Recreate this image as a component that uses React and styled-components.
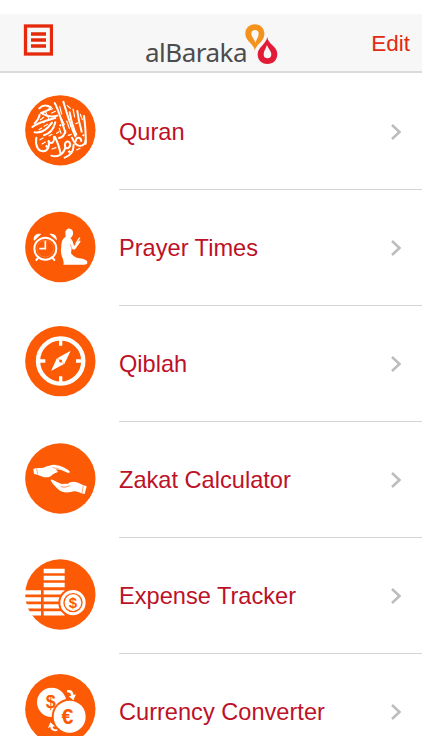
import styled, { createGlobalStyle } from 'styled-components';

const ORANGE = '#fd5a05';

const QuranIcon = () => (
  <g fill="none" stroke="#fff" strokeLinecap="round" strokeLinejoin="round">
    <g strokeWidth="6">
      <path d="M119 54 C128 68 139 104 151 143" />
      <path d="M145 50 C153 76 164 116 181 154" />
      <path d="M164 82 C168 104 174 128 184 149" />
      <path d="M187 78 C190 102 196 126 200 140" />
      <path d="M207 93 C211 122 213 150 212 176" />
      <path d="M73 70 C83 60 96 60 108 67 C101 78 89 80 78 84 C94 94 112 97 127 92" />
      <path d="M52 126 C70 112 96 106 121 99" />
      <path d="M59 142 C77 145 96 134 111 113" />
      <path d="M59 115 C66 109 72 99 74 89" />
      <path d="M87 151 C105 146 116 132 121 112" />
      <path d="M132 159 C143 157 149 149 151 138" />
      <path d="M64 158 C60 180 68 199 85 199 C99 198 104 184 101 168" />
      <path d="M101 169 C111 181 119 169 117 155" />
      <path d="M120 156 C128 173 134 190 136 204" />
      <path d="M109 212 C128 218 146 207 151 188" />
      <path d="M151 187 C146 173 157 164 164 173 C170 184 158 194 151 187 Z" />
      <path d="M149 218 C168 211 176 197 176 179" />
      <path d="M171 158 C179 177 187 187 202 181 C208 178 212 173 212 166" />
      <path d="M182 168 C184 155 197 155 199 168" />
    </g>
    <g strokeWidth="3.5">
      <path d="M92 82 L103 104 M101 76 L113 71 M110 84 L121 79" />
      <path d="M76 104 L86 97 M87 124 L98 118 M72 134 L80 129" />
      <path d="M134 64 L140 87 M157 62 L166 70 M174 72 L179 96" />
      <path d="M139 100 L148 119 M155 108 L163 130 M196 88 L202 104" />
      <path d="M75 164 L84 159 M81 177 L91 171 M102 153 L111 148" />
      <path d="M138 145 L133 130 M160 151 L169 148 M185 195 L195 190" />
      <path d="M111 192 L123 188 M125 145 L132 140 M182 116 L189 113" />
    </g>
    <g fill="#fff" stroke="none">
      <path d="M90 184l5 -5 5 5 -5 5zM158 200l5 -5 5 5 -5 5zM132 121l4 -4 4 4 -4 4zM83 111l4 -4 4 4 -4 4zM201 151l4 -4 4 4 -4 4z" />
    </g>
  </g>
);

const PrayerIcon = () => (
  <g>
    <g fill="none" stroke="#fff">
      <circle cx="91" cy="146" r="33" strokeWidth="6" />
      <path d="M91 122 V146 H73" strokeWidth="5" />
      <path d="M70 173 L64 180 M112 173 L118 180" strokeWidth="6" strokeLinecap="round" />
    </g>
    <path d="M56 119 C55 106 65 98 79 102 L58 122 Z M103 102 C116 98 127 107 125 121 Z" fill="#fff" />
    <circle cx="91" cy="146" r="25" fill="none" stroke="#fff" strokeWidth="1" opacity="0.55" />
    <path
      fill="#fff"
      d="M151 99 C151 90 157 85 164 86 C172 87 175 93 174 102 C173 109 169 112 166 115 C172 119 174 126 177 138 L190 124 C193 120 198 122 196 126 L181 147 C178 151 173 149 170 145 L168 160 C174 167 181 173 193 175 C207 177 217 180 217 187 C217 193 213 194 206 194 H145 C148 186 144 181 143 175 C137 162 137 150 139 138 C140 123 143 115 152 110 Z"
    />
    <path d="M182 132 L190 119 L195 113" fill="none" stroke="#fff" strokeWidth="4" />
    <path d="M170 146 L166 133" fill="none" stroke={ORANGE} strokeWidth="1.5" />
  </g>
);

const QiblahIcon = () => (
  <g>
    <circle cx="137" cy="135" r="68" fill="none" stroke="#fff" strokeWidth="13" />
    <path d="M137 72 V89 M137 181 V198 M74 135 H91 M183 135 H200" stroke="#fff" strokeWidth="10" />
    <path d="M167 104 L148 144 L128 126 Z M108 165 L126 126 L147 144 Z" fill="#fff" />
    <circle cx="137" cy="135" r="4.5" fill={ORANGE} />
  </g>
);

const ZakatIcon = () => (
  <g fill="#fff">
    <path d="M55 108 C65 103 75 106 85 104 C97 99 108 95 119 95 C134 98 149 101 163 114 C166 119 163 121 158 119 L137 110 C133 111 127 109 122 110 C128 113 130 116 127 118 C116 121 111 127 103 132 C90 135 78 130 68 125 L57 123 Z" />
    <path d="M108 144 C105 139 110 138 114 141 L134 151 C142 155 151 150 158 153 C166 145 178 145 189 149 C198 153 206 157 215 160 L209 183 C198 183 190 175 180 175 C166 177 154 181 142 176 C132 174 124 163 114 153 Z" />
    <path d="M112 103 C119 106 126 107 133 108" fill="none" stroke={ORANGE} strokeWidth="1.5" />
    <path d="M137 160 C146 165 155 162 164 158" fill="none" stroke={ORANGE} strokeWidth="2" />
    <path d="M65 107 L68 124 M205 157 L201 180" stroke={ORANGE} strokeWidth="1.5" />
  </g>
);

const ExpenseIcon = () => (
  <g>
    <path
      stroke="#fff"
      strokeWidth="13"
      d="M86 63 H149 M86 84 H149 M86 105 H149 M86 127 H149 M86 148 H149 M86 169 H149 M86 190 H149"
    />
    <path
      stroke="#fff"
      strokeWidth="13"
      d="M30 127 H78 M30 148 H78 M30 169 H78 M38 190 H78"
    />
    <circle cx="174" cy="158" r="44" fill={ORANGE} />
    <circle cx="174" cy="158" r="33.5" fill="none" stroke="#fff" strokeWidth="9" />
    <circle cx="174" cy="158" r="25" fill="#fff" />
    <IconText x="174" y="174" $size={45}>$</IconText>
  </g>
);

const CurrencyIcon = () => (
  <g>
    <circle cx="110" cy="127" r="44" fill="#fff" />
    <IconText x="107" y="144" $size={54}>$</IconText>
    <circle cx="164" cy="170" r="54" fill={ORANGE} />
    <circle cx="164" cy="170" r="48" fill="#fff" />
    <IconText x="157" y="192" $size={64}>€</IconText>
    <path d="M156 91 C169 88 174 94 176 105 L183 103 L175 121 L161 109 L168 107 C168 100 164 97 156 97 Z" fill="#fff" />
    <path d="M127 213 C114 215 107 210 106 201 L99 204 L106 187 L120 199 L113 200 C114 207 119 209 127 208 Z" fill="#fff" />
  </g>
);

// viewY lines each drawing up with its row
const items = [
  { name: 'Quran', Icon: QuranIcon, cy: 136, viewY: 0 },
  { name: 'Prayer Times', Icon: PrayerIcon, cy: 141, viewY: 3 },
  { name: 'Qiblah', Icon: QiblahIcon, cy: 135.5, viewY: 3 },
  { name: 'Zakat Calculator', Icon: ZakatIcon, cy: 136.5, viewY: 0 },
  { name: 'Expense Tracker', Icon: ExpenseIcon, cy: 133.5, viewY: -3 },
  { name: 'Currency Converter', Icon: CurrencyIcon, cy: 147.5, viewY: 15 },
];

function App() {
  return (
    <>
      <GlobalStyle />
      <Screen>
        <Header>
          <MenuButton aria-label="Menu">
            <svg width="30" height="32" viewBox="0 0 30 32" fill="none" stroke="#e52a0c">
              <rect x="2.500" y="2" width="26" height="28" strokeWidth="3.300" />
              <path d="M8 10 H23 M8 16 H23 M8 22 H23" strokeWidth="3.400" />
            </svg>
          </MenuButton>
          <Brand>
            <BrandName>alBaraka</BrandName>
            <BrandMark viewBox="342 36 102 126">
              <path
                fill="#f5921e"
                fillRule="evenodd"
                d="M374 119 C375 101 346 91 346 68 C346 51 358 40 375 40 C392 40 404 53 403 71 C401 92 379 99 374 119 Z M376 95 C380 84 386 77 386 68 C386 61 382 57 375 57 C368 57 364 61 364 68 C364 77 373 83 376 95 Z"
              />
              <path
                fill="#e21c38"
                fillRule="evenodd"
                d="M412 78 C413 99 442 106 442 129 C442 147 430 159 412 159 C394 159 383 147 383 130 C383 108 407 102 412 78 Z M411 102 C407 114 401 120 401 130 C401 138 405 142 412 142 C420 142 424 138 424 130 C424 120 415 114 411 102 Z"
              />
            </BrandMark>
          </Brand>
          <EditButton>Edit</EditButton>
        </Header>
        <List>
          {items.map(({ name, Icon, cy, viewY }) => (
            <Row key={name}>
              <RowIcon viewBox={`0 ${viewY} 270 270`}>
                <circle cx="136" cy={cy} r="105.500" fill={ORANGE} />
                <Icon />
              </RowIcon>
              <RowBody>
                <RowLabel>{name}</RowLabel>
                <Chevron viewBox="0 0 12 18">
                  <path d="M2 2 L9.500 9 L2 16" />
                </Chevron>
              </RowBody>
            </Row>
          ))}
        </List>
      </Screen>
    </>
  );
}

const GlobalStyle = createGlobalStyle`
  * {
    box-sizing: border-box;
  }
  body {
    margin: 0;
    background: #fff;
    font-family: "Liberation Sans", Arial, sans-serif;
  }
`;

const Screen = styled.div`
  width: 422px;
  height: 736px;
  padding-top: 14px;
  overflow: hidden;
  background: #fff;
`;

const Header = styled.header`
  display: grid;
  grid-template-columns: 122px 1fr auto;
  height: 59px;
  padding: 0 12px 0 23px;
  background: #f7f7f7;
  border-bottom: 2px solid #dadada;
`;

const MenuButton = styled.button`
  justify-self: start;
  align-self: start;
  margin-top: 10px;
  padding: 0;
  border: none;
  background: none;
  line-height: 0;
  cursor: pointer;
`;

const Brand = styled.div`
  display: flex;
  align-items: flex-start;
  padding-top: 9px;
`;

const BrandName = styled.span`
  margin-top: 11px;
  font-family: "Noto Sans", sans-serif;
  font-size: 26px;
  line-height: 36px;
  letter-spacing: -0.5px;
  color: #4c4c4e;
`;

const BrandMark = styled.svg`
  width: 34px;
  height: 42px;
  margin-left: -3px;
`;

const EditButton = styled.button`
  align-self: start;
  margin-top: 16px;
  padding: 0;
  border: none;
  background: none;
  font-family: inherit;
  font-size: 22.5px;
  line-height: 28px;
  color: #e02b12;
  cursor: pointer;
`;

const List = styled.div`
  display: flex;
  flex-direction: column;
  padding-top: 1px;
`;

const Row = styled.div`
  display: flex;
  flex-shrink: 0;
  height: 116px;
  padding-left: 15px;
`;

const RowIcon = styled.svg`
  width: 90px;
  height: 90px;
  margin-top: 11px;
  margin-right: 14px;
  flex-shrink: 0;
`;

const RowBody = styled.div`
  display: flex;
  flex: 1;
  align-items: center;
  justify-content: space-between;
  padding-right: 20px;
  border-bottom: 1px solid #d4d4d4;
`;

const RowLabel = styled.span`
  font-size: 23.6px;
  line-height: 28px;
  color: #bd1128;
  white-space: nowrap;
`;

const Chevron = styled.svg`
  width: 12px;
  height: 18px;
  fill: none;
  stroke: #bcbcbf;
  stroke-width: 2.5;
`;

const IconText = styled.text`
  font-size: ${({ $size }) => $size}px;
  font-weight: bold;
  text-anchor: middle;
  fill: ${ORANGE};
`;

export default App;
